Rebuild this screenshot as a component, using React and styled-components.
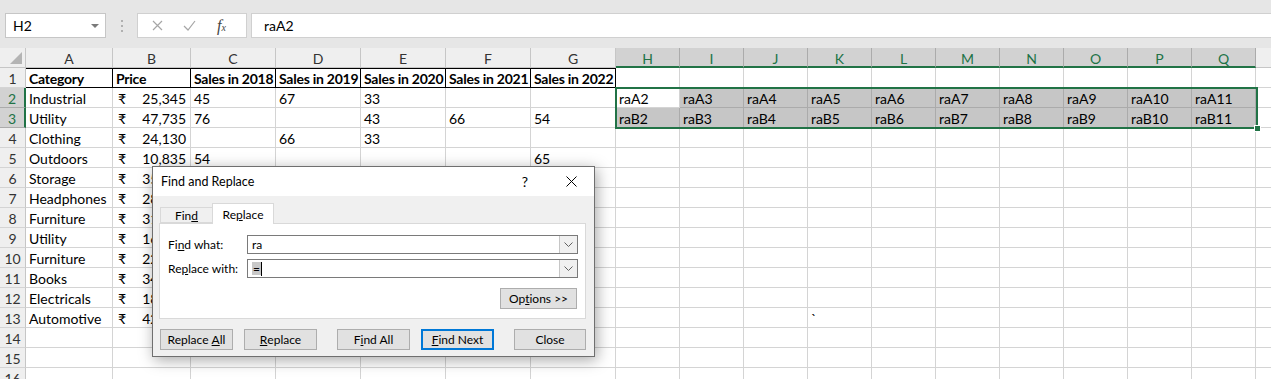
import React from "react";
import styled, { createGlobalStyle } from "styled-components";

const GlobalStyle = createGlobalStyle`
  html, body {
    margin: 0;
    height: 100%;
    overflow: hidden;
    background: #fff;
  }
  body {
    font-family: Lato, "Liberation Sans", sans-serif;
    color: #000;
  }
`;

const GREEN = "#217346";
const COLS = ["A", "B", "C", "D", "E", "F", "G", "H", "I", "J", "K", "L", "M", "N", "O", "P", "Q", "R"];
const WIDTHS = [87, 78, 85, 85, 85, 85, 85, 64, 64, 64, 64, 64, 64, 64, 64, 64, 64, 64];
const ROW_COUNT = 16;

const header = ["Category", "Price", "Sales in 2018", "Sales in 2019", "Sales in 2020", "Sales in 2021", "Sales in 2022"];
const data = [
  ["Industrial", "25,345", "45", "67", "33", "", ""],
  ["Utility", "47,735", "76", "", "43", "66", "54"],
  ["Clothing", "24,130", "", "66", "33", "", ""],
  ["Outdoors", "10,835", "54", "", "", "", "65"],
  ["Storage", "35,420"],
  ["Headphones", "28,760"],
  ["Furniture", "31,250"],
  ["Utility", "16,980"],
  ["Furniture", "22,615"],
  ["Books", "34,190"],
  ["Electricals", "18,475"],
  ["Automotive", "42,830"],
];

const isSelCol = (c) => c >= 7 && c <= 16;
const isSelRow = (r) => r === 2 || r === 3;

/* ---------- formula bar ---------- */

const Page = styled.div`
  position: relative;
  width: 100%;
  height: 100%;
  overflow: hidden;
`;

const TopBar = styled.div`
  display: flex;
  align-items: center;
  height: 48px;
  padding: 13px 0 10px 5px;
  box-sizing: border-box;
  background: #e6e6e6;
`;

const NameBox = styled.div`
  display: flex;
  align-items: center;
  justify-content: space-between;
  box-sizing: border-box;
  width: 101px;
  height: 25px;
  padding: 0 6px 0 7px;
  background: #fff;
  border: 1px solid #c6c6c6;
  font-size: 14px;
`;

const DropCaret = styled.span`
  width: 0;
  height: 0;
  border-left: 4px solid transparent;
  border-right: 4px solid transparent;
  border-top: 4px solid #7a7a7a;
`;

const Grip = styled.div`
  display: flex;
  justify-content: center;
  width: 31px;
`;

const FxBox = styled.div`
  display: flex;
  align-items: center;
  box-sizing: border-box;
  width: 110px;
  height: 25px;
  background: #fff;
  border: 1px solid #d0d0d0;
  padding-left: 14px;
  gap: 20px;
`;

const FxText = styled.span`
  font-family: "Liberation Serif", serif;
  font-style: italic;
  font-size: 16px;
  color: #444;
  margin-left: 1px;
  sub {
    font-size: 10px;
    vertical-align: 0;
  }
`;

const FormulaInput = styled.div`
  flex: 1;
  display: flex;
  align-items: center;
  box-sizing: border-box;
  height: 25px;
  margin-left: 4px;
  padding-left: 12px;
  background: #fff;
  border: 1px solid #d0d0d0;
  border-right: none;
  font-size: 14px;
`;

/* ---------- sheet ---------- */

const SheetWrap = styled.div`
  position: relative;
  width: max-content;
`;

const Sheet = styled.div`
  display: grid;
  grid-template-columns: 26px ${WIDTHS.map((w) => `${w}px`).join(" ")};
  grid-auto-rows: 20px;
  font-size: 14px;
`;

const Corner = styled.div`
  position: relative;
  box-sizing: border-box;
  background: #efefef;
  border-right: 1px solid #c6c6c6;
  border-bottom: 1px solid #c6c6c6;
  &::after {
    content: "";
    position: absolute;
    right: 3px;
    bottom: 3px;
    width: 0;
    height: 0;
    border-left: 12px solid transparent;
    border-bottom: 12px solid #b4b4b4;
  }
`;

const ColHead = styled.div`
  box-sizing: border-box;
  text-align: center;
  line-height: 21px;
  background: ${(p) => (p.$sel ? "#d2d2d2" : "#efefef")};
  color: ${(p) => (p.$sel ? GREEN : "#333")};
  border-right: 1px solid ${(p) => (p.$sel ? "#ababab" : "#c6c6c6")};
  border-bottom: ${(p) => (p.$sel ? `2px solid ${GREEN}` : "1px solid #c6c6c6")};
`;

const RowHead = styled.div`
  box-sizing: border-box;
  text-align: center;
  line-height: 21px;
  background: ${(p) => (p.$sel ? "#d2d2d2" : "#efefef")};
  color: ${(p) => (p.$sel ? GREEN : "#333")};
  border-bottom: 1px solid ${(p) => (p.$sel ? "#ababab" : "#d4d4d4")};
  border-right: ${(p) => (p.$sel ? `2px solid ${GREEN}` : "1px solid #c6c6c6")};
`;

const Cell = styled.div`
  box-sizing: border-box;
  padding: 0 3px;
  line-height: 21px;
  white-space: nowrap;
  overflow: hidden;
  font-weight: ${(p) => (p.$bold ? 700 : 400)};
  letter-spacing: ${(p) => (p.$bold ? "-0.25px" : "0")};
  background: ${(p) => (p.$sel ? "#c6c6c6" : "#fff")};
  border-right: 1px solid ${(p) => (p.$boxed ? "#000" : p.$sel ? "#ababab" : "#d4d4d4")};
  border-bottom: 1px solid ${(p) => (p.$boxed ? "#000" : p.$sel ? "#ababab" : "#d4d4d4")};
  ${(p) => p.$boxed && "border-top: 1px solid #000; line-height: 19px;"}
`;

const PriceCell = styled(Cell)`
  display: flex;
  justify-content: space-between;
  padding: 0 4px 0 5px;
`;

const Selection = styled.div`
  position: absolute;
  box-sizing: border-box;
  border: 2px solid ${GREEN};
  pointer-events: none;
  &::after {
    content: "";
    position: absolute;
    right: -5px;
    bottom: -5px;
    width: 5px;
    height: 5px;
    background: ${GREEN};
    border: 1px solid #fff;
  }
`;

/* ---------- dialog ---------- */

const Dialog = styled.div`
  position: absolute;
  left: 152px;
  top: 166px;
  width: 443px;
  height: 191px;
  box-sizing: border-box;
  display: flex;
  flex-direction: column;
  background: #f0f0f0;
  border: 1px solid #6f6f6f;
  box-shadow: 2px 3px 14px rgba(0, 0, 0, 0.35);
  font-size: 12px;
  color: #000;
`;

const TitleBar = styled.div`
  display: flex;
  align-items: center;
  height: 29px;
  background: #fff;
  padding-left: 8px;
`;

const TitleText = styled.span`
  flex: 1;
  font-size: 12.5px;
`;

const TitleBtn = styled.div`
  display: flex;
  align-items: center;
  justify-content: center;
  width: 46px;
  height: 29px;
  font-size: 14px;
`;

const DialogBody = styled.div`
  flex: 1;
  display: flex;
  flex-direction: column;
  padding: 7px 8px 0 6px;
`;

const TabRow = styled.div`
  display: flex;
  align-items: flex-end;
  height: 20px;
  padding-left: 1px;
  position: relative;
  z-index: 1;
`;

const Tab = styled.div`
  box-sizing: border-box;
  display: flex;
  align-items: center;
  justify-content: center;
  width: ${(p) => (p.$active ? 62 : 52)}px;
  height: ${(p) => (p.$active ? 21 : 16)}px;
  margin-bottom: ${(p) => (p.$active ? -1 : 0)}px;
  background: ${(p) => (p.$active ? "#fff" : "#f0f0f0")};
  border: 1px solid #d9d9d9;
  border-bottom: ${(p) => (p.$active ? "none" : "1px solid #d9d9d9")};
  border-right: ${(p) => (p.$active ? "1px solid #d9d9d9" : "none")};
  padding-top: ${(p) => (p.$active ? 0 : 1)}px;
`;

const Panel = styled.div`
  box-sizing: border-box;
  height: 96px;
  background: #fff;
  border: 1px solid #d9d9d9;
  padding: 11px 7px 0 8px;
  display: flex;
  flex-direction: column;
  gap: 5px;
`;

const FieldRow = styled.div`
  display: flex;
  align-items: center;
`;

const FieldLabel = styled.span`
  width: 79px;
`;

const Combo = styled.div`
  flex: 1;
  display: flex;
  align-items: center;
  box-sizing: border-box;
  height: 19px;
  border: 1px solid #7a7a7a;
  background: #fff;
  padding-left: 4px;
`;

const ComboText = styled.span`
  flex: 1;
  display: flex;
  align-items: center;
  font-size: 12px;
`;

const Highlight = styled.span`
  background: #c8c8c8;
  line-height: 13px;
  padding: 0 1px;
`;

const Caret = styled.span`
  display: inline-block;
  width: 1px;
  height: 14px;
  background: #000;
`;

const ComboArrow = styled.div`
  display: flex;
  align-items: center;
  justify-content: center;
  width: 17px;
  height: 17px;
  background: #f0f0f0;
  border-left: 1px solid #c6c6c6;
`;

const OptionsRow = styled.div`
  display: flex;
  justify-content: flex-end;
  margin-top: 5px;
  padding-right: 1px;
`;

const Button = styled.div`
  box-sizing: border-box;
  display: flex;
  align-items: center;
  justify-content: center;
  width: ${(p) => p.$w || 73}px;
  height: 21px;
  background: #e1e1e1;
  border: ${(p) => (p.$primary ? "2px solid #0078d7" : "1px solid #adadad")};
  white-space: pre;
`;

const ButtonRow = styled.div`
  display: flex;
  gap: 20px;
  margin-top: 10px;
  padding-left: 1px;
`;

const ButtonGroup = styled.div`
  display: flex;
  gap: 11px;
`;

const Chevron = () => (
  <svg width="9" height="5" viewBox="0 0 9 5">
    <polyline points="0.5,0.5 4.5,4.5 8.5,0.5" fill="none" stroke="#606060" strokeWidth="1" />
  </svg>
);

const Combobox = ({ children }) => (
  <Combo>
    <ComboText>{children}</ComboText>
    <ComboArrow>
      <Chevron />
    </ComboArrow>
  </Combo>
);

function renderCell(r, c) {
  const key = `${r}-${c}`;
  if (r === 1 && c < 7) {
    return (
      <Cell key={key} $bold $boxed>
        {header[c]}
      </Cell>
    );
  }
  const row = r >= 2 && r <= 13 ? data[r - 2] : null;
  if (row && c === 1) {
    return (
      <PriceCell key={key}>
        <span>₹</span>
        <span>{row[1]}</span>
      </PriceCell>
    );
  }
  if (row && c < 7) {
    return <Cell key={key}>{row[c] || ""}</Cell>;
  }
  if (isSelRow(r) && isSelCol(c)) {
    const text = `ra${r === 2 ? "A" : "B"}${c - 5}`;
    return (
      <Cell key={key} $sel={!(r === 2 && c === 7)}>
        {text}
      </Cell>
    );
  }
  if (r === 13 && c === 10) {
    return <Cell key={key}>`</Cell>;
  }
  return <Cell key={key} />;
}

export default function App() {
  const selLeft = 26 + WIDTHS.slice(0, 7).reduce((a, b) => a + b, 0);
  const selWidth = WIDTHS.slice(7, 17).reduce((a, b) => a + b, 0);
  const rows = Array.from({ length: ROW_COUNT }, (_, i) => i + 1);

  return (
    <Page>
      <GlobalStyle />
      <TopBar>
        <NameBox>
          <span>H2</span>
          <DropCaret />
        </NameBox>
        <Grip>
          <svg width="2" height="12" viewBox="0 0 2 12">
            <rect x="0" y="0" width="2" height="2" fill="#b0b0b0" />
            <rect x="0" y="5" width="2" height="2" fill="#b0b0b0" />
            <rect x="0" y="10" width="2" height="2" fill="#b0b0b0" />
          </svg>
        </Grip>
        <FxBox>
          <svg width="11" height="11" viewBox="0 0 11 11">
            <path d="M1 1 L10 10 M10 1 L1 10" stroke="#a6a6a6" strokeWidth="1.2" />
          </svg>
          <svg width="13" height="11" viewBox="0 0 13 11">
            <path d="M1 6 L5 10 L12 1" fill="none" stroke="#a6a6a6" strokeWidth="1.2" />
          </svg>
          <FxText>
            f<sub>x</sub>
          </FxText>
        </FxBox>
        <FormulaInput>raA2</FormulaInput>
      </TopBar>

      <SheetWrap>
        <Sheet>
          <Corner />
          {COLS.map((col, c) => (
            <ColHead key={col} $sel={isSelCol(c)}>
              {col}
            </ColHead>
          ))}
          {rows.map((r) => (
            <React.Fragment key={r}>
              <RowHead $sel={isSelRow(r)}>{r}</RowHead>
              {COLS.map((_, c) => renderCell(r, c))}
            </React.Fragment>
          ))}
        </Sheet>
        <Selection style={{ left: selLeft - 1, top: 39, width: selWidth + 3, height: 42 }} />
      </SheetWrap>

      <Dialog>
        <TitleBar>
          <TitleText>Find and Replace</TitleText>
          <TitleBtn>?</TitleBtn>
          <TitleBtn>
            <svg width="11" height="11" viewBox="0 0 11 11">
              <path d="M0.5 0.5 L10.5 10.5 M10.5 0.5 L0.5 10.5" stroke="#000" strokeWidth="1" />
            </svg>
          </TitleBtn>
        </TitleBar>
        <DialogBody>
          <TabRow>
            <Tab>
              Fin<u>d</u>
            </Tab>
            <Tab $active>
              Re<u>p</u>lace
            </Tab>
          </TabRow>
          <Panel>
            <FieldRow>
              <FieldLabel>
                Fi<u>n</u>d what:
              </FieldLabel>
              <Combobox>ra</Combobox>
            </FieldRow>
            <FieldRow>
              <FieldLabel>
                Re<u>p</u>lace with:
              </FieldLabel>
              <Combobox>
                <Highlight>=</Highlight>
                <Caret />
              </Combobox>
            </FieldRow>
            <OptionsRow>
              <Button $w={77}>
                Op<u>t</u>ions {">>"}
              </Button>
            </OptionsRow>
          </Panel>
          <ButtonRow>
            <ButtonGroup>
              <Button>
                Replace <u>A</u>ll
              </Button>
              <Button>
                <u>R</u>eplace
              </Button>
            </ButtonGroup>
            <ButtonGroup>
              <Button>
                F<u>i</u>nd All
              </Button>
              <Button $primary>
                <u>F</u>ind Next
              </Button>
            </ButtonGroup>
            <Button>Close</Button>
          </ButtonRow>
        </DialogBody>
      </Dialog>
    </Page>
  );
}
